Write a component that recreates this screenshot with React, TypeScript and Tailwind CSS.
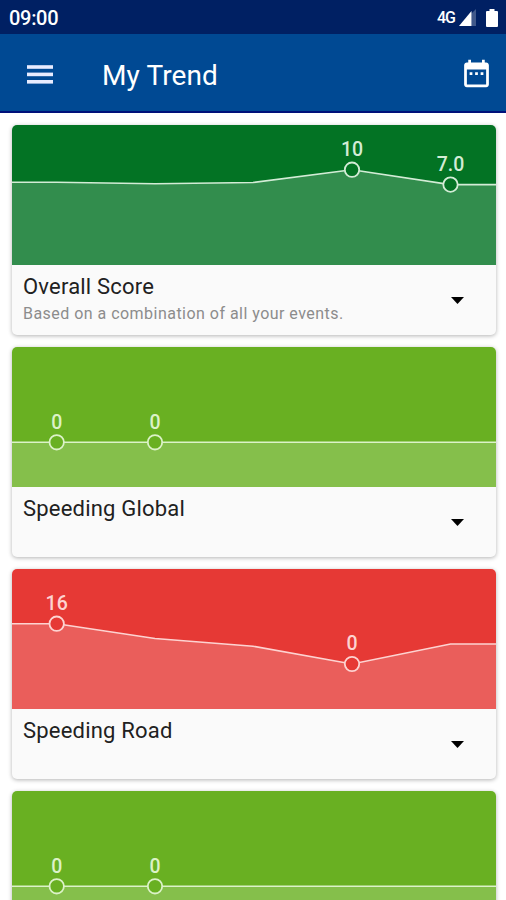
type Point = { x: number; y: number; label?: string }

type Trend = {
    id: number
    title?: string
    description?: string
    color: string
    stroke: string
    points: Point[]
}

const flatPoints: Point[] = [
    { x: 0, y: 95.3 },
    { x: 44.7, y: 95.3, label: "0" },
    { x: 143, y: 95.3, label: "0" },
    { x: 484, y: 95.3 },
]

const trends: Trend[] = [
    {
        id: 1,
        title: "Overall Score",
        description: "Based on a combination of all your events.",
        color: "#037324",
        stroke: "#d3ecd6",
        points: [
            { x: 0, y: 57.2 },
            { x: 44.7, y: 57.2 },
            { x: 143, y: 58.7 },
            { x: 241, y: 57.5 },
            { x: 340, y: 44.7, label: "10" },
            { x: 438.5, y: 59.6, label: "7.0" },
            { x: 484, y: 59.6 },
        ],
    },
    {
        id: 2,
        title: "Speeding Global",
        color: "#69b022",
        stroke: "#dcf2c8",
        points: flatPoints,
    },
    {
        id: 3,
        title: "Speeding Road",
        color: "#e63935",
        stroke: "#fdd3d1",
        points: [
            { x: 0, y: 54.7 },
            { x: 44.7, y: 54.7, label: "16" },
            { x: 143, y: 69.5 },
            { x: 241, y: 77.2 },
            { x: 340, y: 95, label: "0" },
            { x: 438.5, y: 75 },
            { x: 484, y: 75 },
        ],
    },
    {
        id: 4,
        color: "#69b022",
        stroke: "#dcf2c8",
        points: flatPoints,
    },
]

const StatusBar = () => (
    <div className="flex h-[34px] items-center justify-between bg-[#002063] pl-[9px] pr-2 pt-[1px] text-white">
        <span className="text-[20px] font-medium leading-none tracking-[-0.3px]">09:00</span>
        <div className="flex items-center">
            <span className="text-[16px] font-medium leading-none tracking-[-1px]">4G</span>
            <svg width="17" height="17" viewBox="0 0 17 17" className="ml-[4px]">
                <path d="M12.5 4.5L17 0v17h-4.5z" fill="#fff" fillOpacity="0.25" />
                <path d="M0 17L12.5 2V17z" fill="#fff" />
            </svg>
            <svg width="12" height="18" viewBox="0 0 12 18" className="ml-[10px]">
                <path d="M3.5 0h5v2H11q1 0 1 1v14q0 1-1 1H1q-1 0-1-1V3q0-1 1-1h2.5z" fill="#fff" />
            </svg>
        </div>
    </div>
)

const Header = () => (
    <header className="flex h-[79px] items-center border-b-2 border-[#00107a] bg-[#004993] pl-[27px] pr-[13px] text-white">
        <svg width="26" height="19" viewBox="0 0 26 19" fill="#e8ecff" className="mt-[3px]">
            <rect width="26" height="3.6" y="0.2" />
            <rect width="26" height="3.6" y="7.6" />
            <rect width="26" height="3.6" y="15" />
        </svg>
        <h1 className="ml-[49px] mt-[7px] flex-1 text-[28px] leading-none tracking-[0.1px]">My Trend</h1>
        <svg width="33" height="33" viewBox="0 0 24 24" fill="#fff" className="mt-[1px]">
            <path d="M9 11H7v2h2v-2zm4 0h-2v2h2v-2zm4 0h-2v2h2v-2zm2-7h-1V2h-2v2H8V2H6v2H5c-1.11 0-1.99.9-1.99 2L3 20c0 1.1.89 2 2 2h14c1.1 0 2-.9 2-2V6c0-1.1-.9-2-2-2zm0 16H5V9h14v11z" />
        </svg>
    </header>
)

const TrendChart = ({ trend }: { trend: Trend }) => {
    const line = trend.points.map((p) => `${p.x},${p.y}`).join(" ")

    return (
        <svg width="484" height="140" viewBox="0 0 484 140" className="block">
            <rect width="484" height="140" fill={trend.color} />
            <polygon points={`0,140 ${line} 484,140`} fill="#fff" fillOpacity="0.19" />
            <polyline points={line} fill="none" stroke={trend.stroke} strokeWidth="1.6" />
            {trend.points
                .filter((p) => p.label)
                .map((p) => (
                    <g key={p.x}>
                        <circle cx={p.x} cy={p.y} r="7.2" fill={trend.color} stroke={trend.stroke} strokeWidth="1.8" />
                        <text x={p.x} y={p.y - 13.8} textAnchor="middle" fill={trend.stroke} className="text-[19.5px] font-medium">
                            {p.label}
                        </text>
                    </g>
                ))}
        </svg>
    )
}

const TrendCard = ({ trend }: { trend: Trend }) => (
    <div className="h-[210.3px] w-[484px] shrink-0 overflow-hidden rounded-[5px] bg-[#fafafa] shadow-[0_1px_4px_rgba(0,0,0,0.3)]">
        <TrendChart trend={trend} />
        {trend.title && (
            <div className="flex h-[70px] items-center justify-between pl-[11px] pr-8">
                <div className="h-full pt-[9px]">
                    <h2 className="text-[22px] leading-[26px] tracking-[0.2px] text-[#212121]">{trend.title}</h2>
                    {trend.description && (
                        <p className="mt-[4px] text-[16px] leading-[20px] tracking-[0.47px] text-[#8c8c8c]">
                            {trend.description}
                        </p>
                    )}
                </div>
                <svg width="13" height="7" viewBox="0 0 13 7" className="mt-[1px]">
                    <path d="M0 0h13L6.5 7z" fill="#000" />
                </svg>
            </div>
        )}
    </div>
)

const App = () => {
    return (
        <div className="flex h-[900px] w-[506px] flex-col overflow-hidden bg-white font-[Roboto,sans-serif]">
            <StatusBar />
            <Header />
            <main className="flex flex-1 flex-col gap-[12px] overflow-hidden px-3 pt-[11.5px]">
                {trends.map((trend) => (
                    <TrendCard key={trend.id} trend={trend} />
                ))}
            </main>
        </div>
    )
}

export default App
